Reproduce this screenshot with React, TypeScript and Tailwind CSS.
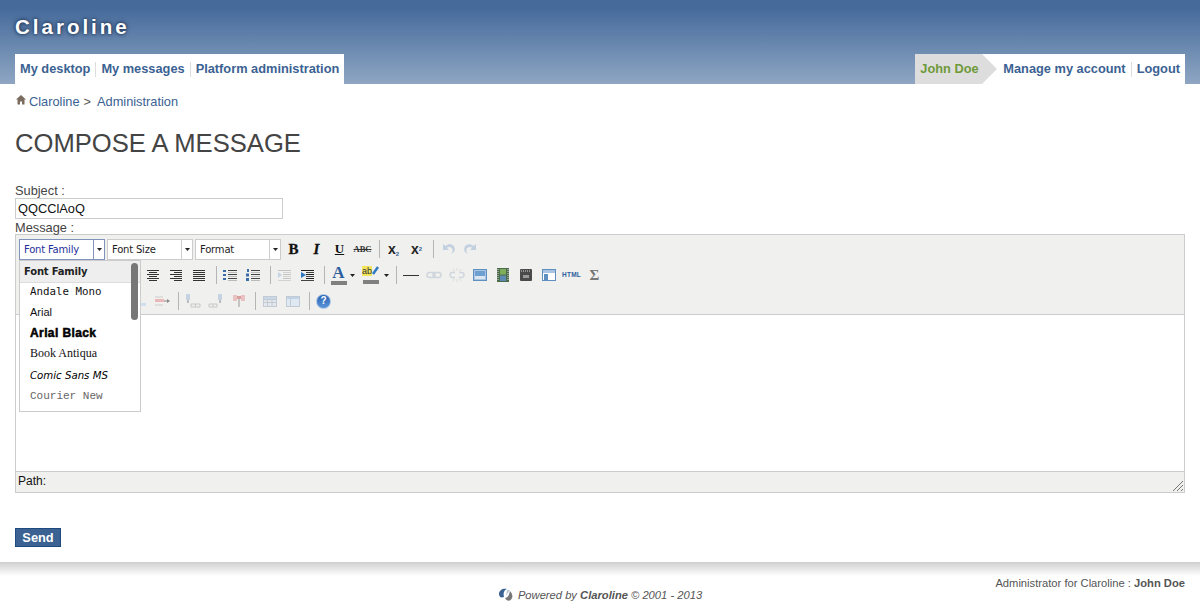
import React from "react";

const Sep = () => (
  <div className="w-[8px] h-[26px] flex items-center">
    <div className="ml-[5px] w-px h-[18px] bg-[#b5b5b5]"></div>
  </div>
);

// one toolbar button
const Btn = ({ children, w = "w-[23px]" }: { children: React.ReactNode; w?: string }) => (
  <div className={`${w} h-[26px] flex items-center justify-center shrink-0`}>{children}</div>
);

const Ico = ({ children }: { children: React.ReactNode }) => (
  <svg width="16" height="16" viewBox="0 0 16 16" className="block">
    {children}
  </svg>
);

const Lines = ({ rows, color = "#333" }: { rows: [number, number, number][]; color?: string }) => (
  <Ico>
    {rows.map(([x, y, w], i) => (
      <rect key={i} x={x} y={y} width={w} height="1" fill={color} />
    ))}
  </Ico>
);

const Arrow = () => (
  <svg width="5" height="3" viewBox="0 0 5 3" className="block">
    <path d="M0 0h5L2.5 3z" fill="#222" />
  </svg>
);

const Select = ({ label, active }: { label: string; active?: boolean }) => (
  <div className={`flex h-[21px] border bg-white text-[10px] leading-[19px] font-['DejaVu_Sans',sans-serif] ${active ? "w-[86px] border-[#7f93bd] text-[#1c2f9a]" : "w-[86px] border-[#ccc] text-[#222]"}`}>
    <div className="flex-1 pl-[4px] tracking-[-0.2px]">{label}</div>
    <div className={`w-[11px] border-l flex items-center justify-center ${active ? "border-[#7f93bd]" : "border-[#ccc]"}`}>
      <Arrow />
    </div>
  </div>
);

const fontItems = [
  { name: "Andale Mono", cls: "font-['DejaVu_Sans_Mono',monospace] text-[10.8px] text-[#111] h-[19px]" },
  { name: "Arial", cls: "font-['Liberation_Sans',sans-serif] text-[11px] text-[#111] h-[21px]" },
  { name: "Arial Black", cls: "font-['Liberation_Sans',sans-serif] text-[12px] font-bold text-black [-webkit-text-stroke:0.5px_#000] tracking-[0.4px] h-[20px]" },
  { name: "Book Antiqua", cls: "font-['Liberation_Serif',serif] text-[12px] text-[#111] h-[20px]" },
  { name: "Comic Sans MS", cls: "font-['DejaVu_Sans',sans-serif] italic text-[10.2px] text-black h-[26px]" },
  { name: "Courier New", cls: "font-['Liberation_Mono',monospace] text-[11px] text-[#666] h-[14px]" },
];

const FontMenu = () => (
  <div className="absolute left-[3px] top-[25px] w-[122px] h-[152px] border border-[#ccc] bg-white">
    <div className="h-[22px] bg-[#eee] border-b border-[#ddd] pl-[4px] text-[10px] font-bold leading-[21px] text-[#222] font-['DejaVu_Sans',sans-serif] tracking-[-0.2px]">
      Font Family
    </div>
    <div>
      {fontItems.map((f) => (
        <div key={f.name} className={`pl-[10px] flex items-center ${f.cls}`}>
          {f.name}
        </div>
      ))}
    </div>
    <div className="absolute right-[2px] top-[2px] w-[7px] h-[57px] rounded-[4px] bg-[#777]"></div>
  </div>
);

const Toolbar = () => (
  <div className="relative bg-[#f0f0ee] border-b border-[#ccc] pt-px">
    {/* row 1 */}
    <div className="h-[26px] flex items-center pl-[3px]">
      <Select label="Font Family" active />
      <div className="w-[2px]"></div>
      <Select label="Font Size" />
      <div className="w-[2px]"></div>
      <div className="w-[87px]"><Select label="Format" /></div>
      <Btn><span className="font-['Liberation_Serif',serif] font-bold text-[15px] text-[#111] [-webkit-text-stroke:0.3px_#111]">B</span></Btn>
      <Btn><span className="font-['Liberation_Serif',serif] font-bold italic text-[15px] text-[#111] [-webkit-text-stroke:0.3px_#111]">I</span></Btn>
      <Btn><span className="font-['Liberation_Serif',serif] font-bold underline text-[13px] text-[#111]">U</span></Btn>
      <Btn><span className="font-['Liberation_Serif',serif] font-bold line-through text-[8.5px] text-[#333]">ABC</span></Btn>
      <Sep />
      <Btn>
        <span className="font-['Liberation_Sans',sans-serif] font-bold text-[14px] leading-none text-[#222]">x<sub className="text-[6px] text-[#3b6292]">2</sub></span>
      </Btn>
      <Btn>
        <span className="font-['Liberation_Sans',sans-serif] font-bold text-[14px] leading-none text-[#222]">x<sup className="text-[6px] text-[#3b6292]">2</sup></span>
      </Btn>
      <Sep />
      <Btn>
        <Ico>
          <path d="M3 3v6h6L6.800 6.800C9 5.200 12 6 12.500 8.500c.4 2-.5 3.500-1.500 4.500 3-1 4.500-3.500 3.500-6.500C13.500 3.500 9 2 5.500 5z" fill="#c3d0e0" />
        </Ico>
      </Btn>
      <Btn>
        <Ico>
          <path d="M13 3v6H7l2.200-2.200C7 5.200 4 6 3.500 8.500c-.4 2 .5 3.500 1.500 4.500-3-1-4.500-3.500-3.500-6.500C2.500 3.500 7 2 10.500 5z" fill="#c3d0e0" />
        </Ico>
      </Btn>
    </div>
    {/* row 2, left part is hidden behind the open menu */}
    <div className="h-[26px] flex items-center pl-[126px]">
      <Btn><Lines rows={[[1,3,12],[3,5,8],[1,7,12],[3,9,8],[1,11,12],[3,13,8]]} /></Btn>
      <Btn><Lines rows={[[1,3,12],[5,5,8],[1,7,12],[5,9,8],[1,11,12],[5,13,8]]} /></Btn>
      <Btn><Lines rows={[[1,3,12],[1,5,12],[1,7,12],[1,9,12],[1,11,12],[1,13,12]]} /></Btn>
      <Sep />
      <Btn>
        <Ico>
          <rect x="0" y="3" width="3" height="2" fill="#3b6ea8" />
          <rect x="0" y="7" width="3" height="2" fill="#3b6ea8" />
          <rect x="0" y="11" width="3" height="2" fill="#3b6ea8" />
          <rect x="5" y="3" width="9" height="1" fill="#444" />
          <rect x="5" y="7" width="9" height="1" fill="#444" />
          <rect x="5" y="11" width="9" height="1" fill="#444" />
          <rect x="5" y="5" width="9" height="1" fill="#bbb" />
          <rect x="5" y="9" width="9" height="1" fill="#bbb" />
          <rect x="5" y="13" width="9" height="1" fill="#bbb" />
        </Ico>
      </Btn>
      <Btn>
        <Ico>
          <rect x="1" y="2" width="2" height="3" fill="#3b6ea8" />
          <rect x="0" y="6.500" width="3" height="3" fill="#3b6ea8" />
          <rect x="0" y="11" width="3" height="3" fill="#3b6ea8" />
          <rect x="5" y="3" width="9" height="1" fill="#444" />
          <rect x="5" y="7" width="9" height="1" fill="#444" />
          <rect x="5" y="11" width="9" height="1" fill="#444" />
          <rect x="5" y="5" width="9" height="1" fill="#bbb" />
          <rect x="5" y="9" width="9" height="1" fill="#bbb" />
          <rect x="5" y="13" width="9" height="1" fill="#bbb" />
        </Ico>
      </Btn>
      <Sep />
      <Btn>
        <Ico>
          <path d="M5 8L1 5v6z" fill="#c6d3e3" />
          <rect x="1" y="3" width="13" height="1" fill="#c4c4c4" />
          <rect x="6" y="5" width="8" height="1" fill="#d2d2d2" />
          <rect x="6" y="7" width="8" height="1" fill="#c4c4c4" />
          <rect x="6" y="9" width="8" height="1" fill="#d2d2d2" />
          <rect x="6" y="11" width="8" height="1" fill="#c4c4c4" />
          <rect x="1" y="13" width="13" height="1" fill="#d2d2d2" />
        </Ico>
      </Btn>
      <Btn>
        <Ico>
          <path d="M6 8L1 5v6z" fill="#2f78c4" />
          <rect x="1" y="3" width="13" height="1" fill="#222" />
          <rect x="6" y="5" width="8" height="1" fill="#444" />
          <rect x="6" y="7" width="8" height="1" fill="#222" />
          <rect x="6" y="9" width="8" height="1" fill="#444" />
          <rect x="6" y="11" width="8" height="1" fill="#222" />
          <rect x="1" y="13" width="13" height="1" fill="#444" />
        </Ico>
      </Btn>
      <Sep />
      <div className="w-[32px] h-[26px] flex items-center shrink-0 pl-[3px]">
        <div className="w-[17px] flex flex-col items-center">
          <span className="font-['Liberation_Serif',serif] font-bold text-[17px] leading-[14px] text-[#2d5f9e]">A</span>
          <div className="w-[16px] h-[4px] bg-[#808080] mt-[1px]"></div>
        </div>
        <div className="ml-[3px]"><Arrow /></div>
      </div>
      <div className="w-[32px] h-[26px] flex items-center shrink-0 pl-[3px]">
        <div className="w-[17px] flex flex-col items-center relative">
          <div className="w-[17px] h-[13px] flex items-start">
            <span className="bg-[#f2e45c] font-['Liberation_Sans',sans-serif] text-[9px] leading-[10px] text-[#333]">ab</span>
            <svg width="7" height="10" viewBox="0 0 7 10" className="block">
              <path d="M6 1L1 8" stroke="#2f78c4" strokeWidth="2.500" />
            </svg>
          </div>
          <div className="w-[16px] h-[4px] bg-[#808080] mt-[1px]"></div>
        </div>
        <div className="ml-[5px]"><Arrow /></div>
      </div>
      <Sep />
      <Btn><div className="w-[16px] h-px bg-[#333]"></div></Btn>
      <Btn>
        <Ico>
          <rect x="1" y="5.500" width="8" height="5" rx="2.500" fill="none" stroke="#d0d6dd" strokeWidth="1.500" />
          <rect x="7" y="5.500" width="8" height="5" rx="2.500" fill="none" stroke="#d0d6dd" strokeWidth="1.500" />
        </Ico>
      </Btn>
      <Btn>
        <Ico>
          <path d="M6 5.500H3.500a2.500 2.500 0 000 5H6M10 5.500h2.500a2.500 2.500 0 010 5H10" fill="none" stroke="#d0d6dd" strokeWidth="1.500" />
          <path d="M8 1v3M8 12v3M4 2l1.500 2.500M12 2l-1.500 2.500M4 14l1.500-2.500M12 14l-1.500-2.500" stroke="#dcdcdc" />
        </Ico>
      </Btn>
      <Btn>
        <Ico>
          <rect x="1.500" y="2.500" width="13" height="11" fill="#a9c4e2" stroke="#5f8fc0" />
          <rect x="3" y="4" width="10" height="5" fill="#6f9fd0" />
          <rect x="3" y="9" width="10" height="3" fill="#dce6ef" />
        </Ico>
      </Btn>
      <Btn>
        <Ico>
          <rect x="2" y="1" width="12" height="14" fill="#4c6b4a" />
          <rect x="5" y="2" width="6" height="5.500" fill="#7fae5a" />
          <rect x="5" y="8.500" width="6" height="5.500" fill="#5c8ab0" />
          <path d="M3 2v12M13 2v12" stroke="#d8d8d8" strokeDasharray="1 1" />
        </Ico>
      </Btn>
      <Btn>
        <Ico>
          <rect x="2" y="2" width="12" height="12" rx="1" fill="#4a4a4a" />
          <path d="M3 4h10" stroke="#ddd" strokeDasharray="1 1" />
          <rect x="5" y="8" width="6" height="3" fill="#999" />
        </Ico>
      </Btn>
      <Btn>
        <Ico>
          <rect x="1.500" y="2.500" width="13" height="11" fill="#fff" stroke="#5f8fc0" />
          <rect x="2" y="3" width="12" height="3" fill="#a9c4e2" />
          <rect x="3" y="7" width="4" height="6" fill="#5f8fc0" />
        </Ico>
      </Btn>
      <Btn>
        <span className="font-['Liberation_Sans',sans-serif] font-bold text-[6.5px] tracking-[0.2px] text-[#2d5f9e]">HTML</span>
      </Btn>
      <Btn><span className="font-['Liberation_Serif',serif] font-bold text-[15px] text-[#777]">Σ</span></Btn>
    </div>
    {/* row 3 */}
    <div className="h-[26px] flex items-center pl-[111px]">
      <Btn>
        <Ico><rect x="5" y="10" width="10" height="3" fill="#cfdff0" /></Ico>
      </Btn>
      <Btn>
        <Ico>
          <path d="M1 4h8M1 8h8M1 12h8" stroke="#ccc" />
          <rect x="1" y="6" width="9" height="3" fill="#eab8b8" />
          <path d="M10 8h4" stroke="#888" />
          <path d="M13 6l3 2-3 2z" fill="#888" />
        </Ico>
      </Btn>
      <Sep />
      <Btn>
        <Ico>
          <rect x="1" y="1" width="4" height="6" fill="#c6d3e3" />
          <path d="M3 7v3" stroke="#888" />
          <path d="M6 11h9M6 14h9M6 11v3M10.500 11v3M15 11v3" stroke="#c8c8c8" fill="none" />
        </Ico>
      </Btn>
      <Btn>
        <Ico>
          <rect x="10" y="1" width="4" height="6" fill="#c6d3e3" />
          <path d="M12 7v3" stroke="#888" />
          <path d="M1 11h8M1 14h8M1 11v3M5 11v3M9 11v3" stroke="#c8c8c8" fill="none" />
        </Ico>
      </Btn>
      <Btn>
        <Ico>
          <rect x="2" y="2" width="4" height="6" fill="#eac2c2" />
          <rect x="10" y="2" width="4" height="6" fill="#eac2c2" />
          <rect x="6" y="3" width="4" height="3" fill="#d9a0a0" />
          <path d="M8 6v8" stroke="#999" />
        </Ico>
      </Btn>
      <Sep />
      <Btn>
        <Ico>
          <rect x="1.500" y="3.500" width="13" height="10" fill="#e4e8ed" stroke="#c2cad4" />
          <path d="M1 6.500h14M1 9.500h14M5.500 4v9M10 4v9" stroke="#c2cad4" />
          <rect x="2" y="4" width="12" height="2" fill="#c9d8e8" />
        </Ico>
      </Btn>
      <Btn>
        <Ico>
          <rect x="1.500" y="3.500" width="13" height="10" fill="#dfe9f4" stroke="#c2cad4" />
          <rect x="2" y="4" width="12" height="2" fill="#c0d2e6" />
          <path d="M5.500 6v7" stroke="#c2cad4" />
        </Ico>
      </Btn>
      <Sep />
      <Btn>
        <div className="w-[15px] h-[15px] rounded-full bg-gradient-to-b from-[#2a62b4] to-[#5a94d8] border border-[#a9c4e6] flex items-center justify-center text-white text-[10px] font-bold font-['Liberation_Sans',sans-serif] leading-none">?</div>
      </Btn>
    </div>
    <FontMenu />
  </div>
);

export default function App() {
  return (
    <div className="h-[616px] overflow-hidden bg-white font-['Liberation_Sans',Arial,sans-serif] text-[12.8px] text-[#444]">
      {/* Banner */}
      <header className="h-[84px] bg-gradient-to-b from-[#466b9b] from-10% to-[#8fa6c3] px-[15px]">
        <div className="h-[54px] pt-[15px]">
          <div className="text-[20.5px] leading-[24px] font-bold tracking-[3px] text-white [text-shadow:0_0_5px_#1f3658,0_0_3px_#1f3658]">Claroline</div>
        </div>
        <div className="flex justify-between h-[30px] font-bold text-[#3b6292] leading-[29px]">
          <nav className="flex bg-white px-[5px]">
            <a>My desktop</a>
            <span className="w-px h-[15px] bg-[#ddd] mx-[5px] mt-[8px]"></span>
            <a>My messages</a>
            <span className="w-px h-[15px] bg-[#ddd] mx-[5px] mt-[8px]"></span>
            <a>Platform administration</a>
          </nav>
          <nav className="flex bg-white pr-[5px]">
            <div className="relative w-[67px] bg-[#ddd] pl-[5px] text-[#6f9a3a] mr-[21px]">
              John Doe
              <div className="absolute left-full top-0 border-y-[15px] border-l-[15px] border-y-transparent border-l-[#ddd]"></div>
            </div>
            <a>Manage my account</a>
            <span className="w-px h-[15px] bg-[#ddd] mx-[5px] mt-[8px]"></span>
            <a>Logout</a>
          </nav>
        </div>
      </header>

      {/* Breadcrumbs */}
      <div className="h-[35px] px-[15px] pt-[10px] flex items-start leading-[15px] text-[#3b6292]">
        <svg width="10" height="10" viewBox="0 0 10 10" className="ml-px mt-[1px] mr-[3px]">
          <path d="M5 0l5 4.500H8.500V9.500H6V6.500H4v3H1.500V4.500H0z" fill="#7b6c60" />
        </svg>
        <a>Claroline</a>
        <span className="text-[#555] ml-[4px] mr-[6px]">&gt;</span>
        <a>Administration</a>
      </div>

      <main className="px-[15px]">
        <h1 className="mt-[9px] text-[25.6px] leading-[30px] text-[#444]">COMPOSE A MESSAGE</h1>

        <form className="mt-[25px]">
          <label className="block leading-[15px]">Subject :</label>
          <div className="w-[268px] h-[21px] border border-[#ccc] pl-[2px] leading-[19px] text-[#111]">QQCClAoQ</div>
          <label className="block leading-[15px] mt-px">Message :</label>

          <div className="mt-[-1px] border border-[#ccc]">
            <Toolbar />
            <div className="h-[157px] bg-white border-b border-[#ccc]"></div>
            <div className="relative h-[20px] bg-[#f0f0ee] pl-[2px] text-[12px] leading-[18px] text-[#111]">
              Path:
              <svg width="12" height="12" viewBox="0 0 12 12" className="absolute right-0 bottom-0">
                <path d="M1 11L11 1M5 11l6-6M9 11l2-2" stroke="#777" />
              </svg>
            </div>
          </div>

          <button type="button" className="block mt-[35px] w-[46px] h-[19px] border border-[#1f4a80] bg-[#3b6292] text-white font-bold leading-[15px]">
            Send
          </button>
        </form>
      </main>

      {/* Footer */}
      <footer className="relative mt-[15px] h-[54px] bg-gradient-to-b from-[#cfcfcf] to-white to-[26%]">
        <div className="absolute right-[15px] top-[14px] text-[11.2px] leading-[14px] text-[#555]">
          Administrator for Claroline : <b>John Doe</b>
        </div>
        <div className="absolute inset-x-0 top-[26px] flex justify-center items-center text-[11.2px] leading-[14px] italic text-[#555]">
          <svg width="15" height="14" viewBox="0 0 15 14" className="mr-[5px]">
            <path d="M1 6C1 2 5 0 9 1 6 2 5 5 6 9 3 10 1 9 1 6z" fill="#3b6292" />
            <path d="M7 10c3 0 4-3 5-7 2 2 3 5 2 7-1 3-5 4-7 0z" fill="#777" />
            <path d="M9 2l3 0-4 6z" fill="#b8c6d8" />
          </svg>
          <span>Powered by <b>Claroline</b> © 2001 - 2013</span>
        </div>
      </footer>
    </div>
  );
}
